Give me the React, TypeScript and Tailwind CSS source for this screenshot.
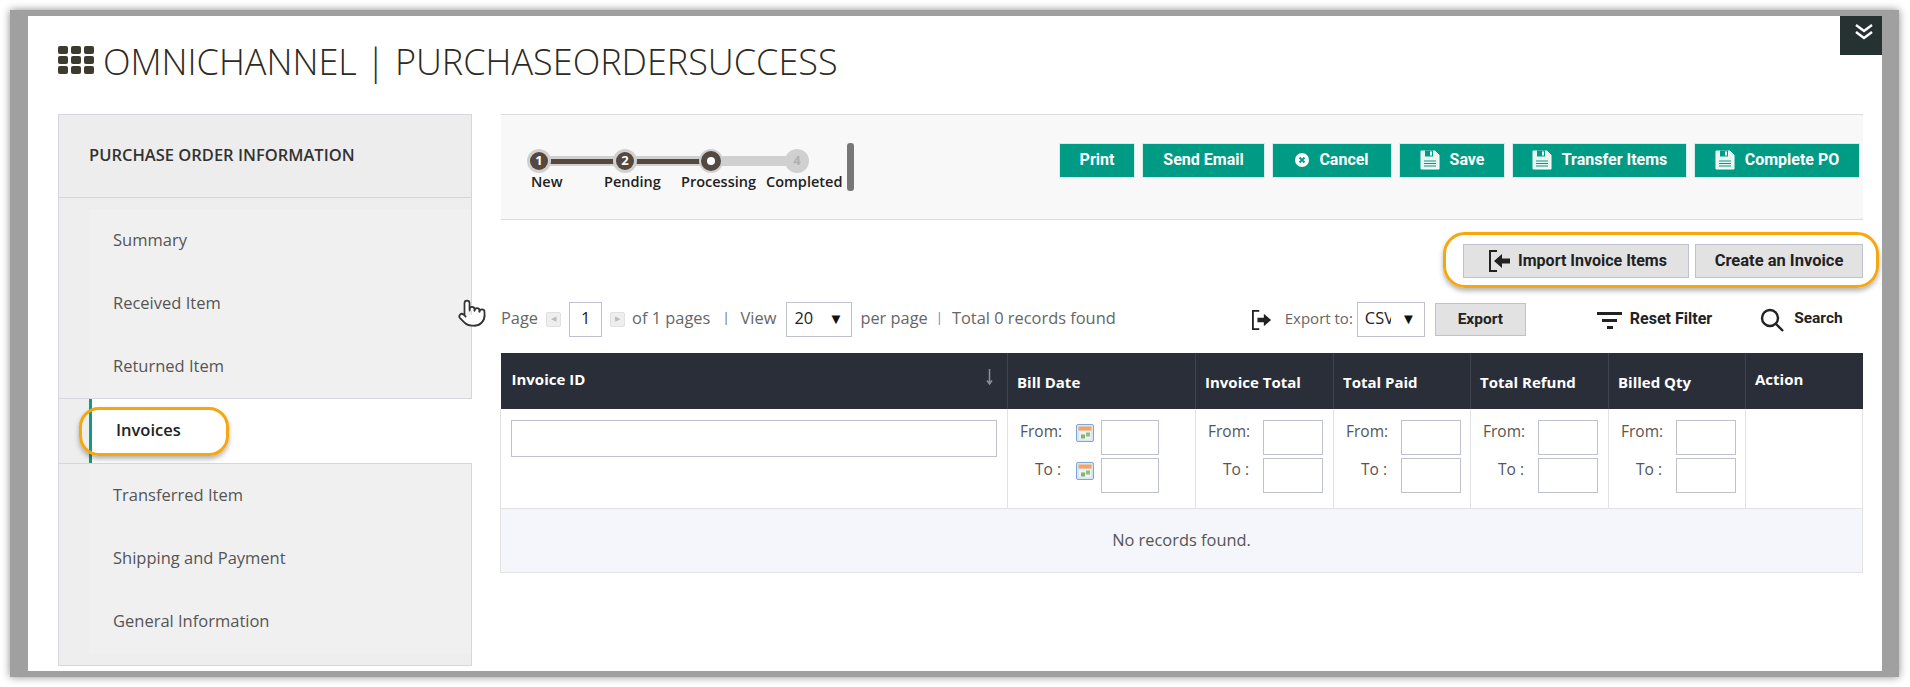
import { Pointer } from 'lucide-react';

const sans = "font-['Open_Sans',sans-serif]";
const btn = "font-['Roboto',sans-serif]";

function GridIcon() {
    return (
        <svg width="36" height="28" viewBox="0 0 36 28" fill="#3d3a30">
            {[0, 10, 20].map((y) =>
                [0, 13, 26].map((x) => <rect key={`${x}-${y}`} x={x} y={y} width="10" height="8" rx="2" />)
            )}
        </svg>
    );
}

function SaveIcon() {
    return (
        <svg width="20" height="20" viewBox="0 0 20 20" fill="none">
            <path d="M1 1h14l4 4v14H1z" fill="#e8f6f3" stroke="#fff" strokeWidth="1" />
            <rect x="5" y="0.5" width="8" height="6" fill="#009b85" />
            <rect x="10" y="1.5" width="2" height="4" fill="#fff" />
            <path d="M4 11h12M4 13.5h12M4 16h12" stroke="#009b85" strokeWidth="1.2" />
        </svg>
    );
}

function CancelIcon() {
    return (
        <svg width="14" height="14" viewBox="0 0 14 14">
            <circle cx="7" cy="7" r="7" fill="#fff" />
            <path d="M4.5 4.5l5 5M9.5 4.5l-5 5" stroke="#009b85" strokeWidth="1.8" />
        </svg>
    );
}

function DoorIcon({ flip = false, size = 22 }: { flip?: boolean; size?: number }) {
    // bracket and arrow; the export one points out of the door
    return (
        <svg width={size} height={size} viewBox="0 0 22 22" fill="none">
            <path d="M8 1H1v20h7" stroke="#222" strokeWidth="2" />
            {flip ? (
                <path d="M6 8.5h7V4l8 7-8 7v-4.5H6z" fill="#222" />
            ) : (
                <path d="M21 8.5h-8V4l-8 7 8 7v-4.5h8z" fill="#222" />
            )}
        </svg>
    );
}

function CalendarIcon() {
    return (
        <svg width="18" height="18" viewBox="0 0 18 18">
            <rect x="0.5" y="0.5" width="17" height="17" rx="1.5" fill="#dbe6f4" stroke="#7ea6d8" />
            <rect x="2.5" y="2.5" width="13" height="4" fill="#f7a35c" />
            <rect x="3" y="7.5" width="12" height="8" fill="#eef2f7" />
            <rect x="5" y="10.5" width="4" height="4" fill="#7cb86c" />
            <rect x="10" y="8.5" width="4" height="4" fill="#8cc07c" />
        </svg>
    );
}

function Btn({ label, icon, w }: { label: string; icon?: React.ReactNode; w: string }) {
    return (
        <div className={`flex h-[35px] items-center justify-center gap-[10px] border border-[#d5ece8] bg-[#009b85] pb-[1px] text-[16px] font-bold text-white ${btn} ${w}`}>
            {icon}
            <span>{label}</span>
        </div>
    );
}

function Step({ n, active, done }: { n: string; active?: boolean; done?: boolean }) {
    return (
        <div className="flex h-[24px] w-[24px] items-center justify-center rounded-full bg-[#d0d0d0]">
            {done && (
                <div className="flex h-[18px] w-[18px] items-center justify-center rounded-full bg-[#54483f] text-[13px] font-bold text-white">
                    {n}
                </div>
            )}
            {active && (
                <div className="flex h-[20px] w-[20px] items-center justify-center rounded-full bg-[#54483f]">
                    <div className="h-[8px] w-[8px] rounded-full bg-white" />
                </div>
            )}
            {!done && !active && <span className="text-[13px] font-bold text-[#b0b0b0]">{n}</span>}
        </div>
    );
}

function Stepper() {
    return (
        <div className="w-[346px] shrink-0 pl-[26px] pt-[7px]">
            <div className="relative flex w-[282px] justify-between">
                <div className="absolute left-[8px] right-[8px] top-[7px] h-[10px] bg-[#d0d0d0]" />
                <div className="absolute left-[12px] top-[10px] h-[5px] w-[171px] bg-[#54483f]" />
                <div className="relative"><Step n="1" done /></div>
                <div className="relative"><Step n="2" done /></div>
                <div className="relative"><Step n="3" active /></div>
                <div className="relative"><Step n="4" /></div>
            </div>
            <div className="mt-[-1px] flex text-[14.5px] font-semibold leading-[20px] text-[#222]">
                <span className="ml-[4px] w-[73px]">New</span>
                <span className="w-[77px]">Pending</span>
                <span className="w-[85px]">Processing</span>
                <span>Completed</span>
            </div>
        </div>
    );
}

function Sidebar() {
    const top = ['Summary', 'Received Item', 'Returned Item'];
    const bottom = ['Transferred Item', 'Shipping and Payment', 'General Information'];
    return (
        <div className={`w-[414px] shrink-0 ${sans}`}>
            <div className="flex h-[84px] items-center border border-[#d6d6de] bg-[#ededed] pb-[1px] pl-[30px] text-[16.5px] font-semibold text-[#333]">
                PURCHASE ORDER INFORMATION
            </div>
            <div className="border-x border-[#d6d6de] bg-[#eeeeee] pl-[30px] pt-[11px]">
                <div className="bg-[#f0f0f0]">
                    {top.map((t) => (
                        <div key={t} className="flex h-[63px] items-center pl-[24px] text-[16.5px] text-[#555]">{t}</div>
                    ))}
                </div>
            </div>
            <div className="flex h-[65px] border-t border-[#d6d6de]">
                <div className="w-[31px] border-l border-[#d6d6de] bg-[#eeeeee]" />
                <div className="flex flex-1 items-center border-l-[3px] border-[#0e9c86] bg-white pb-[1px] pl-[24px] text-[16.5px] font-semibold text-[#222]">
                    Invoices
                </div>
            </div>
            <div className="border border-[#d6d6de] bg-[#eeeeee] pb-[12px] pl-[30px]">
                <div className="bg-[#f0f0f0]">
                    {bottom.map((t) => (
                        <div key={t} className="flex h-[63px] items-center pl-[24px] text-[16.5px] text-[#555]">{t}</div>
                    ))}
                </div>
            </div>
        </div>
    );
}

function Select({ value, w, textW }: { value: string; w: string; textW: string }) {
    return (
        <div className={`flex h-[35px] items-center justify-between border border-[#bfc2cc] pb-[2px] pl-[7px] pr-[8px] text-[16.4px] text-[#222] ${w}`}>
            <span className={`overflow-hidden whitespace-nowrap ${textW}`}>{value}</span>
            <span className="text-[15px] text-[#111]">▼</span>
        </div>
    );
}

function PagerRow() {
    const t = 'mb-[3px]';
    return (
        <div className="mt-[24px] flex h-[35px] items-center text-[16.4px] text-[#666]">
            <span className={t}>Page</span>
            <div className="ml-[8px] flex h-[15px] w-[15px] items-center justify-center rounded-[2px] border border-[#e0e0e0] bg-[#eee] text-[7px] text-[#bbb]">◀</div>
            <div className="ml-[8px] flex h-[35px] w-[33px] items-center justify-center border border-[#bfc2cc] pb-[2px] text-[#222]">1</div>
            <div className="ml-[8px] flex h-[15px] w-[15px] items-center justify-center rounded-[2px] border border-[#e0e0e0] bg-[#eee] text-[7px] text-[#bbb]">▶</div>
            <span className={`ml-[7px] ${t}`}>of 1 pages</span>
            <span className={`ml-[12px] text-[13px] ${t}`}>|</span>
            <span className={`ml-[11px] ${t}`}>View</span>
            <div className="ml-[10px]"><Select value="20" w="w-[66px]" textW="" /></div>
            <span className={`ml-[8px] ${t}`}>per page</span>
            <span className={`ml-[8px] text-[13px] text-[#4a90c8] ${t}`}>|</span>
            <span className={`ml-[9px] ${t}`}>Total 0 records found</span>
            <div className="ml-[136px]"><DoorIcon flip size={20} /></div>
            <span className="mb-[2px] ml-[13px] text-[15px]">Export to:</span>
            <div className="ml-[4px]"><Select value="CSV" w="w-[68px]" textW="w-[26px]" /></div>
            <div className={`ml-[10px] flex h-[33px] w-[91px] items-center justify-center border border-[#bfc2cc] bg-[#e2e2e2] text-[15.5px] font-bold text-[#222] ${btn}`}>Export</div>
            <svg className="ml-[71px]" width="25" height="18" viewBox="0 0 25 18" fill="#222">
                <rect x="0" y="1" width="25" height="3" />
                <rect x="5" y="8" width="15" height="3" />
                <rect x="10" y="15" width="6" height="3" />
            </svg>
            <span className={`mb-[2px] ml-[8px] text-[16px] font-bold text-[#222] ${btn}`}>Reset Filter</span>
            <svg className="ml-[48px]" width="24" height="24" viewBox="0 0 24 24" fill="none" stroke="#222" strokeWidth="2.4">
                <circle cx="10" cy="10" r="8" />
                <path d="M16 16l7 7" />
            </svg>
            <span className={`mb-[2px] ml-[10px] text-[15.5px] font-bold text-[#222] ${btn}`}>Search</span>
        </div>
    );
}

function RangeRow({ label, calendar }: { label: string; calendar?: boolean }) {
    return (
        <div className="flex items-start">
            <span className="w-[44px] pr-[3px] text-right text-[15.5px] text-[#555]">{label}</span>
            {calendar ? (
                <>
                    <div className="ml-[12px] mt-[4px]"><CalendarIcon /></div>
                    <div className="ml-[7px] h-[35px] w-[58px] border border-[#bfc2cc]" />
                </>
            ) : (
                <div className="ml-[11px] h-[35px] w-[60px] border border-[#bfc2cc]" />
            )}
        </div>
    );
}

function Range({ calendar }: { calendar?: boolean }) {
    return (
        <td className="border-r border-[#e2e2e2] align-top">
            <div className="flex flex-col gap-[3px] pl-[12px] pt-[11px]">
                <RangeRow label="From:" calendar={calendar} />
                <RangeRow label="To :" calendar={calendar} />
            </div>
        </td>
    );
}

function Table() {
    const th = 'border-r border-[#40444e] pl-[9px] pt-[2px] text-left align-middle text-[15px] font-bold text-white';
    return (
        <table className="ml-[-1px] mt-[16px] w-[1362px] table-fixed border-collapse">
            <colgroup>
                <col className="w-[507px]" />
                <col className="w-[188px]" />
                <col className="w-[138px]" />
                <col className="w-[137px]" />
                <col className="w-[138px]" />
                <col className="w-[137px]" />
                <col className="w-[117px]" />
            </colgroup>
            <thead>
                <tr className="h-[56px] bg-[#2a2e38]">
                    <th className="relative border-r border-[#40444e] pb-[3px] pl-[11px] text-left text-[15px] font-bold text-white">
                        Invoice ID
                        <svg className="absolute right-[14px] top-[16px]" width="7" height="16" viewBox="0 0 7 16" fill="none" stroke="#8a8e98" strokeWidth="1.5">
                            <path d="M3.5 0v15M1 11.5l2.5 3.5 2.5-3.5" />
                        </svg>
                    </th>
                    <th className={th}>Bill Date</th>
                    <th className={th}>Invoice Total</th>
                    <th className={th}>Total Paid</th>
                    <th className={th}>Total Refund</th>
                    <th className={th}>Billed Qty</th>
                    <th className="pb-[3px] pl-[9px] text-left text-[15px] font-bold text-white">Action</th>
                </tr>
            </thead>
            <tbody>
                <tr className="h-[99px] border-b border-[#e2e2e2]">
                    <td className="border-l border-r border-[#e2e2e2] px-[10px] pt-[11px] align-top">
                        <div className="h-[37px] w-full border border-[#bfc2cc]" />
                    </td>
                    <Range calendar />
                    <Range />
                    <Range />
                    <Range />
                    <Range />
                    <td className="border-r border-[#e2e2e2]" />
                </tr>
                <tr className="h-[64px] border border-[#e2e2e2] bg-[#f4f6fb]">
                    <td colSpan={7} className="text-center text-[16.4px] text-[#555]">No records found.</td>
                </tr>
            </tbody>
        </table>
    );
}

export default function App() {
    return (
        <div className={`h-[687px] w-[1910px] overflow-hidden bg-white pb-[10px] pl-[10px] pr-[11px] pt-[10px] ${sans}`}>
            <div className="h-[667px] bg-[#a0a0a0] pb-[6px] pl-[18px] pr-[17px] pt-[6px] shadow-[0_0_8px_rgba(0,0,0,0.45)]">
                <div className="relative h-[655px] overflow-hidden bg-white pl-[30px] pr-[19px]">
                    {/* ─── Collapse toggle ─── */}
                    <div className="absolute right-0 top-0 flex h-[39px] w-[42px] items-start justify-center bg-[#263132] pl-[5px] pt-[7px]">
                        <svg width="18" height="18" viewBox="0 0 18 18" fill="none" stroke="#fff" strokeWidth="2.4">
                            <path d="M1 2l8 6 8-6M1 9l8 6 8-6" />
                        </svg>
                    </div>

                    {/* ─── Title ─── */}
                    <div className="flex h-[98px] items-start gap-[9px] pt-[28px]">
                        <div className="mt-[2px]"><GridIcon /></div>
                        <h1 className="text-[36px] font-light leading-[36px] text-[#2d2a22]">OMNICHANNEL | PURCHASEORDERSUCCESS</h1>
                    </div>

                    <div className="flex gap-[29px]">
                        <Sidebar />

                        <div className="min-w-0 flex-1">
                            {/* ─── Toolbar ─── */}
                            <div className="flex h-[106px] items-start justify-between border-y border-[#dcdcdc] bg-[#f8f8f8] pr-[3px] pt-[28px]">
                                <div className="mt-[-1px] flex items-start">
                                    <Stepper />
                                    <div className="mt-[1px] h-[48px] w-[7px] shrink-0 rounded-[3px] bg-[#777]" />
                                </div>
                                <div className="flex gap-[7px]">
                                    <Btn label="Print" w="w-[76px]" />
                                    <Btn label="Send Email" w="w-[123px]" />
                                    <Btn label="Cancel" icon={<CancelIcon />} w="w-[120px]" />
                                    <Btn label="Save" icon={<SaveIcon />} w="w-[106px]" />
                                    <Btn label="Transfer Items" icon={<SaveIcon />} w="w-[175px]" />
                                    <Btn label="Complete PO" icon={<SaveIcon />} w="w-[166px]" />
                                </div>
                            </div>

                            {/* ─── Invoice actions ─── */}
                            <div className="relative mt-[24px] flex justify-end gap-[6px]">
                                <div className="absolute bottom-[-10px] right-[-16px] top-[-12px] w-[436px] rounded-[22px] border-[3px] border-[#f5a70d] shadow-[0_3px_5px_rgba(0,0,0,0.3)]" />
                                <div className={`flex h-[34px] w-[226px] items-center justify-center gap-[7px] border border-[#bfc2cc] bg-[#e2e2e2] pl-[4px] text-[16px] font-bold text-[#222] ${btn}`}>
                                    <DoorIcon />
                                    <span>Import Invoice Items</span>
                                </div>
                                <div className={`flex h-[34px] w-[168px] items-center justify-center border border-[#bfc2cc] bg-[#e2e2e2] text-[16.5px] font-bold text-[#222] ${btn}`}>
                                    Create an Invoice
                                </div>
                            </div>

                            <PagerRow />
                            <Table />
                        </div>
                    </div>

                    {/* ─── Callout and mouse pointer over the page ─── */}
                    <div className="absolute left-[51px] top-[391px] h-[49px] w-[150px] rounded-[20px] border-[3px] border-[#f5a70d] shadow-[0_3px_5px_rgba(0,0,0,0.3)]" />
                    <div className="absolute left-[429px] top-[282px]">
                        <Pointer size={30} strokeWidth={1.4} className="fill-white text-[#333]" />
                    </div>
                </div>
            </div>
        </div>
    );
}
